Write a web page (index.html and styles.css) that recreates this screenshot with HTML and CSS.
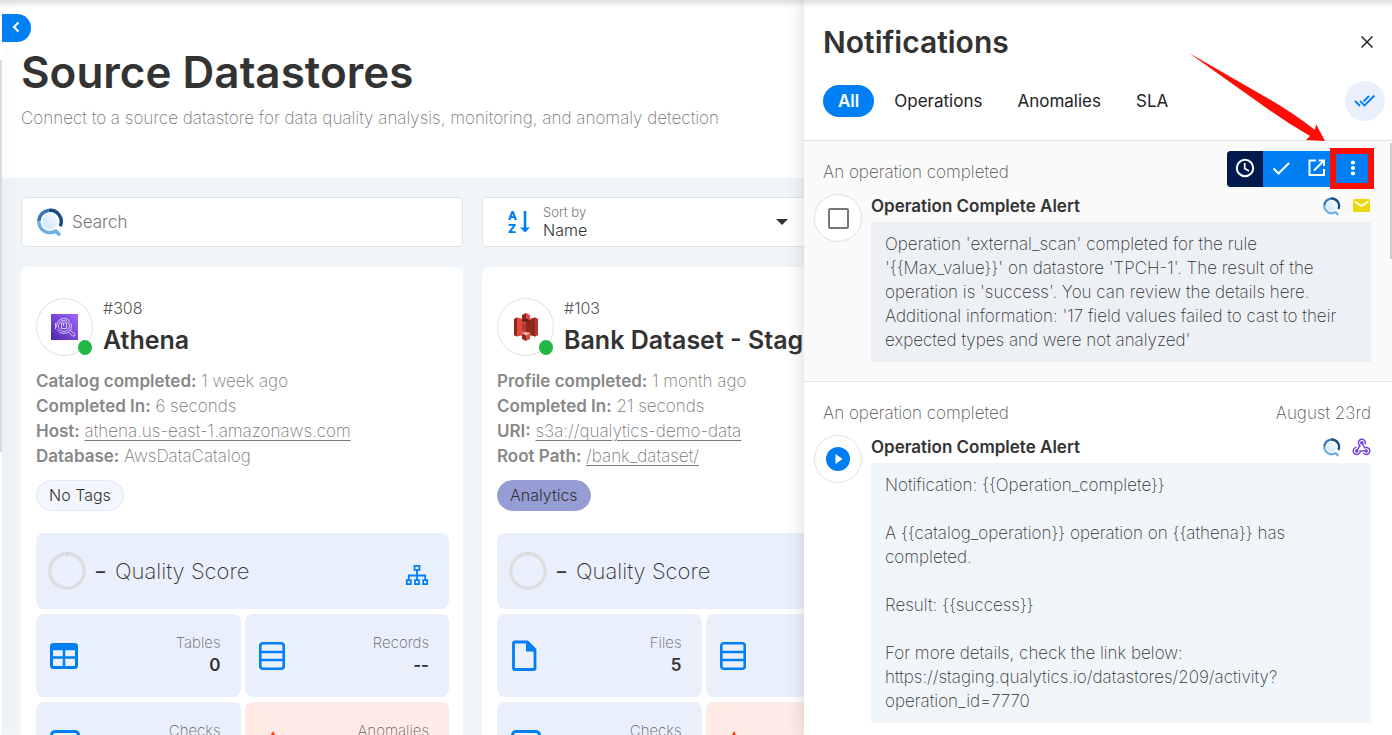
FILE: index.html
```html
<!DOCTYPE html>
<html lang="en">
<head>
<meta charset="utf-8">
<title>Source Datastores</title>
<link rel="stylesheet" href="styles.css">
</head>
<body>
<svg class="defs" aria-hidden="true">
  <defs>
    <linearGradient id="lens" x1="1" y1="0" x2="0" y2="1"><stop offset="0" stop-color="#f4f8fd"/><stop offset="1" stop-color="#cfe5f8"/></linearGradient>
    <linearGradient id="violet" x1="0" y1="1" x2="1" y2="0"><stop offset="0" stop-color="#4d27a8"/><stop offset="1" stop-color="#a166ff"/></linearGradient>
    <symbol id="brand" viewBox="0 0 28 30">
      <circle cx="13.500" cy="14" r="8" fill="url(#lens)"/>
      <g fill="none" stroke-width="3.600">
        <path d="M1.900 14A11.600 11.600 0 0 1 12 2.500" stroke="#3478b5"/>
        <path d="M12 2.500A11.600 11.600 0 0 1 24 19" stroke="#124f80"/>
        <path d="M1.900 14a11.600 11.600 0 0 0 17.600 9.900l4.300 4.300" stroke="#6eb0e3"/>
      </g>
    </symbol>
    <symbol id="sitemap" viewBox="0 0 24 24"><g fill="none" stroke="currentColor" stroke-width="1.800"><path d="M9.500 2.800h5v4h-5zM1.800 17.200h4v4h-4zM10 17.200h4v4h-4zM18.200 17.200h4v4h-4zM12 7v10M3.800 17v-4.500h16.400V17"/></g></symbol>
    <symbol id="table" viewBox="0 0 28 26"><rect x="1.500" y="1.500" width="25" height="23" rx="2" fill="none" stroke="currentColor" stroke-width="3"/><path d="M2 2h24v4H2zM1 14.500h26M14 5v20" fill="currentColor" stroke="currentColor" stroke-width="2.500"/></symbol>
    <symbol id="rows" viewBox="0 0 26 28"><rect x="1.300" y="1.300" width="23.400" height="25.400" rx="2.500" fill="none" stroke="currentColor" stroke-width="2.600"/><path d="M1 10h24M1 18h24" stroke="currentColor" stroke-width="2.300"/></symbol>
    <symbol id="file" viewBox="0 0 26 32"><path d="M3.500 2h12.800L24 9.700V28.500a1 1 0 0 1-1 1H3.500a1 1 0 0 1-1-1V3a1 1 0 0 1 1-1z" fill="none" stroke="currentColor" stroke-width="2.800"/><path d="M15 2l9.500 9.500H15z" fill="currentColor"/></symbol>
    <symbol id="checks" viewBox="0 0 30 28"><rect x="1.500" y="1.500" width="27" height="25" rx="3.500" fill="none" stroke="currentColor" stroke-width="3"/><path d="M8 13l5 5 9-9" fill="none" stroke="currentColor" stroke-width="3"/></symbol>
    <symbol id="warn" viewBox="0 0 28 26"><path d="M14 0l14 25H0z" fill="currentColor"/></symbol>
    <symbol id="webhook" viewBox="0 0 24 24"><path fill="currentColor" d="M10.460 19C9 21.070 6.150 21.590 4.090 20.150C2.040 18.710 1.560 15.840 3 13.750C3.870 12.500 5.210 11.830 6.580 11.770L6.630 13.200C5.720 13.270 4.840 13.740 4.270 14.560C3.270 16 3.580 17.940 4.950 18.910C6.330 19.870 8.260 19.500 9.260 18.070C9.570 17.620 9.750 17.130 9.820 16.630V15.620L15.400 15.580L15.470 15.470C16 14.550 17.150 14.230 18.050 14.750C18.950 15.270 19.260 16.430 18.730 17.350C18.200 18.260 17.040 18.580 16.140 18.060C15.730 17.830 15.440 17.460 15.310 17.040L11.240 17.060C11.130 17.730 10.870 18.380 10.460 19M17.740 11.860C20.270 12.170 22.070 14.440 21.760 16.930C21.450 19.430 19.150 21.200 16.620 20.890C15.130 20.710 13.900 19.860 13.190 18.680L14.430 17.960C14.920 18.730 15.750 19.280 16.750 19.410C18.500 19.620 20.050 18.430 20.260 16.760C20.470 15.090 19.230 13.560 17.500 13.350C16.960 13.290 16.440 13.360 15.970 13.530L15.120 13.970L12.540 9.200H12.320C11.260 9.160 10.410 8.290 10.440 7.250C10.470 6.210 11.400 5.400 12.450 5.440C13.500 5.500 14.330 6.350 14.300 7.390C14.280 7.830 14.110 8.230 13.840 8.540L15.740 12.050C16.360 11.850 17.040 11.780 17.740 11.860M8.250 9.140C7.250 6.790 8.310 4.100 10.620 3.120C12.940 2.140 15.620 3.250 16.620 5.600C17.210 6.970 17.090 8.470 16.420 9.670L15.180 8.950C15.600 8.140 15.670 7.150 15.270 6.220C14.590 4.620 12.780 3.850 11.230 4.500C9.670 5.160 8.970 7 9.650 8.600C9.930 9.260 10.400 9.770 10.970 10.110L11.360 10.320L8.290 15.310C8.320 15.360 8.360 15.420 8.390 15.500C8.880 16.410 8.540 17.560 7.620 18.050C6.710 18.540 5.560 18.180 5.060 17.240C4.570 16.310 4.910 15.160 5.830 14.670C6.220 14.460 6.650 14.410 7.060 14.500L9.370 10.730C8.900 10.300 8.500 9.760 8.250 9.140Z"/></symbol>
  </defs>
</svg>
<div class="app">
  <div class="rail"><div class="rail-thumb"></div></div>
  <main class="page">
    <header class="page-head">
      <button class="collapse" aria-label="Collapse"><svg width="12" height="14" viewBox="0 0 12 14"><path d="M7.500 1.500L3 6l4.500 4.500" fill="none" stroke="#fff" stroke-width="2.200"/></svg></button>
      <div class="page-titles">
        <h1>Source Datastores</h1>
        <p>Connect to a source datastore for data quality analysis, monitoring, and anomaly detection</p>
      </div>
    </header>
    <div class="grid toolbar">
      <label class="field search"><svg class="search-icon"><use href="#brand"/></svg><input type="text" placeholder="Search" aria-label="Search"></label>
      <div class="field sort">
        <svg class="sort-icon" viewBox="0 0 22 24"><g fill="#007ff5" font-family="Roboto" font-weight="900" font-size="13"><text x="0" y="10">A</text><text x="0" y="23">Z</text></g><path d="M17 1v18" stroke="#007ff5" stroke-width="2.600"/><path d="M12 17.500h10l-5 5z" fill="#007ff5"/></svg>
        <div class="sort-box"><label for="sort">Sort by</label><select id="sort"><option>Name</option></select></div>
        <svg class="caret" viewBox="0 0 12 6"><path d="M0 0h12L6 6z" fill="#333"/></svg>
      </div>
    </div>
    <div class="grid">
      <article class="card">
        <div class="card-head">
          <div class="avatar"><svg width="27" height="26" viewBox="0 0 27 26"><path fill="url(#violet)" d="M0 0h27v26H0z"/><g fill="none" stroke="#eee5ff" stroke-width=".8"><circle cx="13" cy="12" r="7.500" stroke-dasharray="20 2"/><circle cx="13" cy="12" r="5.500"/><path d="M10.500 9h5v5.500h-5zM12.500 9v3M17.500 18l4 4c1.500 1 3-.5 2-2l-4-3.500M4.500 9v6"/></g></svg><span class="dot"></span></div>
          <div><div class="num">#308</div><h2>Athena</h2></div>
        </div>
        <div class="meta">
          <div><b>Catalog completed:</b> 1 week ago</div>
          <div><b>Completed In:</b> 6 seconds</div>
          <div><b>Host:</b> <a href="#">athena.us-east-1.amazonaws.com</a></div>
          <div><b>Database:</b> AwsDataCatalog</div>
        </div>
        <span class="chip">No Tags</span>
        <div class="tiles">
          <div class="tile score"><svg class="ring" viewBox="0 0 38 38"><circle cx="19" cy="19" r="17.200" fill="none" stroke="#ddd" stroke-width="3.400"/><path d="M19 0v3.500" stroke="#bfd3e3" stroke-width="1.500"/></svg><b>–</b><span class="score-name">Quality Score</span><svg class="map"><use href="#sitemap"/></svg></div>
          <div class="tile"><svg class="ic" style="width:28px;height:26px"><use href="#table"/></svg><div class="stat"><span>Tables</span><b>0</b></div></div>
          <div class="tile"><svg class="ic" style="width:26px;height:28px"><use href="#rows"/></svg><div class="stat"><span>Records</span><b>--</b></div></div>
          <div class="tile"><svg class="ic" style="width:30px;height:28px"><use href="#checks"/></svg><div class="stat"><span>Checks</span><b>&nbsp;</b></div></div>
          <div class="tile alert"><svg class="ic" style="width:28px;height:28px"><use href="#warn"/></svg><div class="stat"><span>Anomalies</span><b>&nbsp;</b></div></div>
        </div>
      </article>

      <article class="card">
        <div class="card-head">
          <div class="avatar"><svg width="26" height="28" viewBox="0 0 26 28"><path fill="#e04a3f" d="M1 6l3-1.500 9 2 9-2L25 6v16l-3 1.500-9-2-9 2L1 22z"/><path fill="#8c281c" d="M1 6l3-1.500v19L1 22zM13 9l9-4.500v19L13 20z"/><path fill="#b5392d" d="M9 10h8v8H9zM22 4.500L25 6v16l-3 1.500z"/><path fill="#e04a3f" d="M13 0l4 2v6l-4 1zM13 19l4 1v6l-4 2z"/><path fill="#8c281c" d="M13 0L9 2v6l4 1zM13 19l-4 1v6l4 2zM13 10h4v8h-4z"/><path fill="#5e1f18" d="M13 5.500L18 8l-5 1-5-1z"/><path fill="#f2b0a9" d="M13 22.500L18 20l-5-1-5 1z"/></svg><span class="dot"></span></div>
          <div><div class="num">#103</div><h2>Bank Dataset - Staging</h2></div>
        </div>
        <div class="meta">
          <div><b>Profile completed:</b> 1 month ago</div>
          <div><b>Completed In:</b> 21 seconds</div>
          <div><b>URI:</b> <a href="#">s3a://qualytics-demo-data</a></div>
          <div><b>Root Path:</b> <a href="#">/bank_dataset/</a></div>
        </div>
        <span class="chip tagged">Analytics</span>
        <div class="tiles">
          <div class="tile score"><svg class="ring" viewBox="0 0 38 38"><circle cx="19" cy="19" r="17.200" fill="none" stroke="#ddd" stroke-width="3.400"/><path d="M19 0v3.500" stroke="#bfd3e3" stroke-width="1.500"/></svg><b>–</b><span class="score-name">Quality Score</span></div>
          <div class="tile"><svg class="ic" style="width:26px;height:32px"><use href="#file"/></svg><div class="stat"><span>Files</span><b>5</b></div></div>
          <div class="tile"><svg class="ic" style="width:26px;height:28px"><use href="#rows"/></svg></div>
          <div class="tile"><svg class="ic" style="width:30px;height:28px"><use href="#checks"/></svg><div class="stat"><span>Checks</span><b>&nbsp;</b></div></div>
          <div class="tile alert"><svg class="ic" style="width:28px;height:28px"><use href="#warn"/></svg></div>
        </div>
      </article>
    </div>
  </main>

  <aside class="panel">
    <header class="panel-head">
      <div class="panel-row">
        <h2>Notifications</h2>
        <button class="close" aria-label="Close"><svg width="12" height="12" viewBox="0 0 12 12"><path d="M.500.500l11 11M11.500.500l-11 11" stroke="#222" stroke-width="1.500"/></svg></button>
      </div>
      <nav class="tabs">
        <button class="tab on">All</button><button class="tab">Operations</button><button class="tab">Anomalies</button><button class="tab">SLA</button>
        <button class="read-all" aria-label="Mark all as read"><svg width="22" height="14" viewBox="0 0 22 14"><path d="M1 7l5 5M6 7l4.500 4.500L20.500 1.500M9.500 7.500L15 2" fill="none" stroke="#007ff5" stroke-width="1.800"/></svg></button>
      </nav>
    </header>
    <section class="item hovered">
      <div class="item-head"><span>An operation completed</span></div>
      <div class="item-body">
        <div class="round"><input type="checkbox" aria-label="Select notification"></div>
        <div class="item-main">
          <div class="item-title"><h3>Operation Complete Alert</h3><svg class="mini-brand"><use href="#brand"/></svg><svg width="17" height="14" viewBox="0 0 17 14"><rect width="17" height="13" rx="1.500" fill="#ecd70c"/><path d="M1.500 2.500l7 4.500 7-4.500" fill="none" stroke="#fff" stroke-width="1.500"/></svg></div>
          <div class="message">Operation 'external_scan' completed for the rule<br>'{{Max_value}}' on datastore 'TPCH-1'. The result of the<br>operation is 'success'. You can review the details here.<br>Additional information: '17 field values failed to cast to their<br>expected types and were not analyzed'</div>
        </div>
      </div>
      <div class="actions">
        <button class="dark" aria-label="Snooze"><svg viewBox="0 0 20 20"><circle cx="10" cy="10" r="8.200" fill="none" stroke="#fff" stroke-width="2"/><path d="M9.700 5v5.500l4.300 2.600" fill="none" stroke="#fff" stroke-width="1.700"/></svg></button>
        <button aria-label="Mark as read"><svg viewBox="0 0 20 20"><path d="M2.500 10.500l5 5L18 5" fill="none" stroke="#fff" stroke-width="2"/></svg></button>
        <button aria-label="Open"><svg viewBox="0 0 20 20"><path d="M9 2.500H2.500v14.500H17V11M11.500 2.500H17v5.500M17 2.500L7 12.500" fill="none" stroke="#fff" stroke-width="2"/></svg></button>
        <button aria-label="More"><svg viewBox="0 0 20 20"><g fill="#fff"><circle cx="10" cy="4.500" r="2.100"/><circle cx="10" cy="10" r="2.100"/><circle cx="10" cy="15.500" r="2.100"/></g></svg></button>
        <span class="mark"></span>
        <svg class="pointer" viewBox="0 0 137 89"><path d="M0 0L80 46Q104 60 126 77L127 71 136 88 117 87 121 83Q98 70 76 54z" fill="#fe0c06"/></svg>
      </div>
    </section>
    <section class="item">
      <div class="item-head"><span>An operation completed</span><span>August 23rd</span></div>
      <div class="item-body">
        <div class="round"><svg width="24" height="24" viewBox="0 0 24 24"><circle cx="12" cy="12" r="12" fill="#007ff5"/><path d="M9.500 7v10l7-5z" fill="#fff"/></svg></div>
        <div class="item-main">
          <div class="item-title"><h3>Operation Complete Alert</h3><svg class="mini-brand"><use href="#brand"/></svg><svg class="hook"><use href="#webhook"/></svg></div>
          <div class="message">Notification: {{Operation_complete}}<br><br>A {{catalog_operation}} operation on {{athena}} has<br>completed.<br><br>Result: {{success}}<br><br>For more details, check the link below:<br>https://staging.qualytics.io/datastores/209/activity?<br>operation_id=7770</div>
        </div>
      </div>
    </section>
    <div class="panel-thumb"></div>
  </aside>
  <div class="top-shade"></div>
</div>
</body>
</html>
```
FILE: styles.css
```css
* { box-sizing: border-box; }
body { margin: 0; font-family: Inter, "Open Sans", sans-serif; font-size: 17px; font-weight: 200; color: #333; }
h1, h2, h3, p { margin: 0; }
button, input, select { font: inherit; color: inherit; border: 0; padding: 0; background: none; }
svg { flex: none; }
.defs { position: absolute; width: 0; height: 0; }
.app { position: relative; display: flex; height: 100vh; overflow: hidden; background: #f0f5fa; }
.rail { position: relative; z-index: 1; width: 2px; flex: none; padding-top: 60px; background: #fff; box-shadow: 0 0 18px rgba(60, 60, 110, 0.16); }
.rail-thumb { height: 392px; background: #dcdcdc; }
.page { flex: 1; min-width: 0; }
.page-head { padding-top: 14px; height: 178px; background: #fff; }
.collapse { position: relative; z-index: 2; display: flex; align-items: center; justify-content: center; width: 29px; height: 28px; border-radius: 0 14px 14px 0; background: #007ff5; }
.page-titles { padding-left: 19px; }
h1 { font-size: 44px; line-height: 60px; font-weight: 600; }
.page-titles p { line-height: 24px; margin-top: 4px; color: #777; }
.grid { display: grid; grid-template-columns: repeat(3, 1fr); gap: 19px; padding: 0 7px 0 19px; }
.toolbar { padding-top: 19px; padding-bottom: 20px; }
.field { display: flex; align-items: center; height: 50px; border: 1px solid #e2e4e6; border-radius: 4px; background: #fff; }
.search { padding-left: 15px; gap: 8px; }
.search-icon { width: 27px; height: 29px; }
.search input { flex: 1; outline: 0; font-weight: 300; }
.search input::placeholder { color: #777; opacity: 1; }
.sort { padding: 0 135px 0 25px; gap: 13px; }
.sort-icon { width: 22px; height: 24px; }
.sort-box { flex: 1; display: flex; flex-direction: column; font-weight: 300; }
.sort-box label { font-size: 13px; line-height: 16px; color: #777; }
.sort-box select { appearance: none; font-size: 16px; line-height: 20px; height: 20px; }
.caret { width: 12px; height: 6px; }
.card { background: #fff; border-radius: 8px; padding: 31px 14px 14px 15px; }
.card-head { display: flex; gap: 10px; white-space: nowrap; }
.avatar { position: relative; display: flex; align-items: center; justify-content: center; width: 57px; height: 58px; border: 1px solid #e4e4e4; border-radius: 50%; flex: none; }
.dot { position: absolute; right: 0; bottom: 0; width: 14px; height: 15px; border-radius: 50%; background: #22b845; }
.num { font-size: 16px; line-height: 20px; font-weight: 300; color: #555; }
.card h2 { font-size: 25px; line-height: 32px; margin-top: 6px; font-weight: 600; }
.meta { margin-top: 13px; line-height: 25px; color: #777; }
.meta b { font-weight: 600; color: #888; }
.meta a { color: inherit; text-underline-offset: 3px; }
.chip { display: inline-block; margin-top: 11px; padding: 0 12px; font-weight: 300; font-size: 16px; line-height: 29px; border: 1px solid #dfe9f5; border-radius: 16px; background: #f3f7fd; }
.tagged { background: #959dd4; border-color: #959dd4; }
.tiles { display: grid; grid-template-columns: 1fr 1fr; gap: 5px 4px; margin-top: 22px; }
.tile { display: flex; align-items: center; justify-content: space-between; height: 83px; padding: 0 20px 0 14px; border-radius: 8px; background: #e9f0fc; }
.ic { color: #007ff5; }
.score { grid-column: 1 / -1; height: 76px; padding-left: 12px; font-size: 22px; justify-content: flex-start; gap: 10px; }
.score b { font-weight: 500; font-size: 18px; }
.ring { width: 38px; height: 38px; }
.map { width: 24px; height: 24px; margin: 8px 0 0 auto; color: #007ff5; }
.alert { background: #ffebe6; }
.alert .ic { color: #ff4713; }
.stat { text-align: right; display: flex; flex-direction: column; line-height: 23px; padding-bottom: 3px; }
.stat span { font-size: 15px; color: #666; }
.stat b { font-weight: 600; }
.panel { position: absolute; z-index: 3; top: 0; right: 0; bottom: 0; width: 588px; overflow: hidden; background: #fff; box-shadow: 0 0 18px rgba(0, 0, 0, 0.16); }
.panel-head { padding: 23px 7px 23px 19px; border-bottom: 1px solid #e2e2e2; }
.panel-row { display: flex; justify-content: space-between; align-items: center; height: 37px; padding-right: 12px; }
.panel h2 { font-size: 30px; font-weight: 600; line-height: 38px; }
.close { display: flex; }
.tabs { display: flex; align-items: center; gap: 5px; height: 40px; margin-top: 21px; margin-bottom: -4px; }
.tab { height: 32px; padding: 0 15px; border-radius: 16px; font-weight: 400; color: #222; }
.on { background: #007ff5; color: #fff; font-weight: 600; }
.read-all { display: flex; align-items: center; justify-content: center; width: 40px; height: 40px; margin-left: auto; border-radius: 50%; background: #e9f0fc; }
.item { position: relative; padding: 19px 21px 19px 10px; border-bottom: 1px solid #e2e2e2; }
.hovered { background: #fafafa; }
.item-head { display: flex; justify-content: space-between; padding-left: 9px; line-height: 24px; color: #555; }
.item-body { display: flex; gap: 9px; margin-top: 10px; }
.round { display: flex; align-items: center; justify-content: center; width: 48px; height: 48px; flex: none; border: 1px solid #e2e2e2; border-radius: 50%; background: #fff; }
.round input { appearance: none; width: 21px; height: 21px; margin: 0; border: 2px solid #777; border-radius: 2px; background: #fff; }
.item-main { flex: 1; }
.item-title { display: flex; align-items: center; gap: 12px; padding-right: 1px; }
.item-title h3 { flex: 1; font-size: 17px; font-weight: 600; line-height: 24px; }
.mini-brand { width: 18px; height: 19px; }
.hook { width: 23px; height: 22px; color: #7142d5; margin: 0 -3px; }
.message { margin-top: 4px; padding: 10px 14px; line-height: 24px; white-space: nowrap; background: #f0f5fa; }
.hovered .message { background: #edf1f6; }
.actions { position: absolute; top: 10px; right: 21px; display: flex; border-radius: 4px; background: #007ff5; }
.actions button { display: flex; align-items: center; justify-content: center; width: 36px; height: 36px; padding-bottom: 3px; }
.actions button svg { width: 20px; height: 20px; }
.actions .dark { background: #001a4b; border-radius: 4px 0 0 4px; }
.mark { position: absolute; right: -3px; top: -3px; width: 44px; height: 41px; border: 6px solid #fe0c06; }
.pointer { position: absolute; right: 45px; top: -98px; width: 137px; height: 89px; }
.panel-thumb { position: absolute; right: 0; top: 143px; width: 2px; height: 116px; background: #ccc; }
.top-shade { position: absolute; z-index: 4; top: 0; left: 0; right: 0; height: 8px; background: linear-gradient(rgba(0, 0, 0, 0.13), rgba(0, 0, 0, 0)); pointer-events: none; }
```
